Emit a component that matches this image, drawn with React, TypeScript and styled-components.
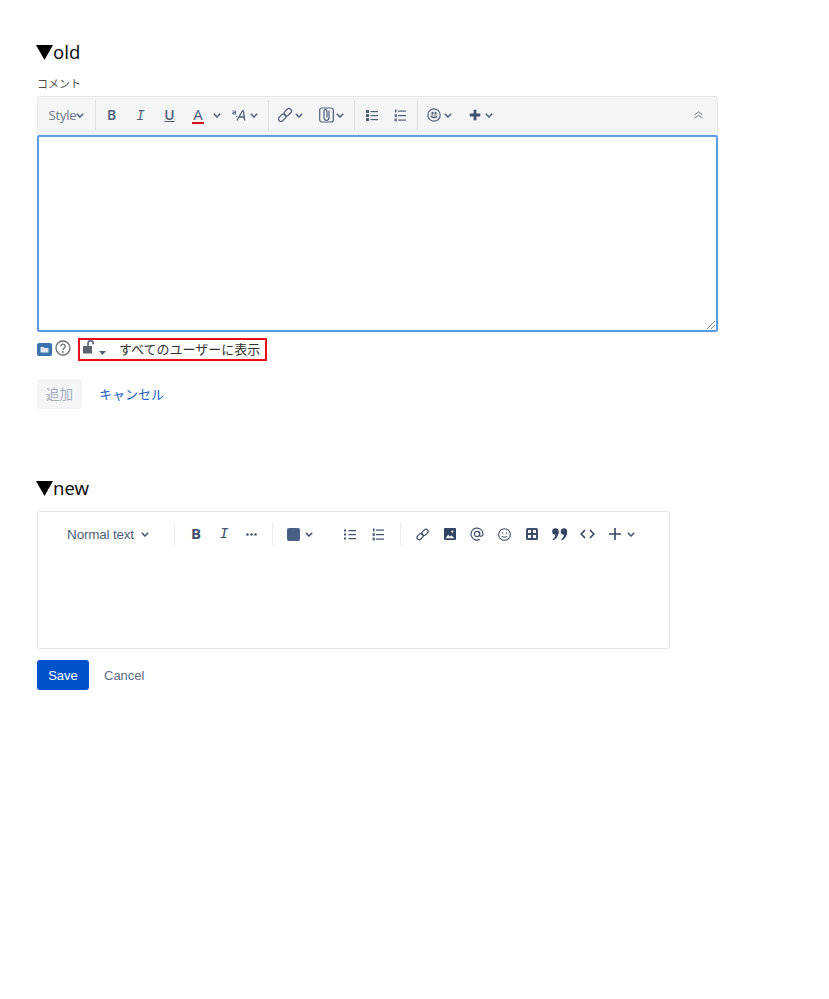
import React from "react";
import styled, { createGlobalStyle } from "styled-components";

const Global = createGlobalStyle`
  html, body { margin: 0; padding: 0; background: #fff; }
  body { font-family: "Noto Sans", "Noto Sans CJK JP", sans-serif; }
`;

const Page = styled.div`
  width: 829px;
  height: 999px;
  padding: 38px 0 0 36px;
  box-sizing: border-box;
  overflow: hidden;
`;

const Heading = styled.h2<{ $top?: number }>`
  margin: ${(p) => p.$top ?? 0}px 0 0;
  font-size: 18.5px;
  font-weight: 400;
  line-height: 28px;
  height: 28px;
  color: #111;
  display: flex;
  align-items: center;
`;

const Tri = styled.svg`
  width: 17px;
  height: 15px;
  margin-top: 1px;
  flex: none;
`;

const Label = styled.div`
  margin: 8px 0 0 1px;
  height: 18px;
  line-height: 18px;
  font-size: 11px;
  color: #505050;
  font-family: "Noto Sans CJK JP", sans-serif;
`;

const OldEditor = styled.div`
  margin: 4px 0 0 1px;
  width: 681px;
`;

const OldBar = styled.div`
  height: 39px;
  box-sizing: border-box;
  background: #f4f5f7;
  border: 1px solid #e4e6ea;
  border-bottom: none;
  border-radius: 3px 3px 0 0;
  padding-bottom: 2px;
  display: flex;
  align-items: center;
`;

const Cell = styled.div<{ $w: number }>`
  width: ${(p) => p.$w}px;
  height: 24px;
  flex: none;
  display: flex;
  align-items: center;
  justify-content: center;
`;

const Sep = styled.div<{ $h?: number; $color?: string }>`
  width: 1px;
  height: ${(p) => p.$h ?? 30}px;
  flex: none;
  background: ${(p) => p.$color ?? "#dcdfe4"};
`;

const Spacer = styled.div<{ $w: number }>`
  width: ${(p) => p.$w}px;
  flex: none;
`;

const Grow = styled.div`
  flex: 1;
`;

const StyleText = styled.span`
  font-size: 13px;
  letter-spacing: -0.2px;
  color: #6b778c;
  font-family: "Open Sans", sans-serif;
`;

const Letter = styled.span<{ $underline?: boolean; $size?: number; $weight?: number; $color?: string; $shift?: number }>`
  font-family: "Open Sans", sans-serif;
  font-size: ${(p) => p.$size ?? 14}px;
  font-weight: ${(p) => p.$weight ?? 600};
  line-height: 16px;
  margin-top: ${(p) => p.$shift ?? 0}px;
  color: ${(p) => p.$color ?? "#505f79"};
  text-decoration: ${(p) => (p.$underline ? "underline" : "none")};
`;

const ItalicLetter = styled.span<{ $size?: number; $color?: string }>`
  font-family: "Liberation Mono", monospace;
  font-style: italic;
  font-size: ${(p) => p.$size ?? 14}px;
  line-height: 16px;
  margin-top: 2px;
  color: ${(p) => p.$color ?? "#505f79"};
`;

const ColorA = styled.span`
  font-family: "Open Sans", sans-serif;
  font-size: 15px;
  line-height: 15px;
  color: #505f79;
  padding: 0 1px;
  margin-top: 1px;
  border-bottom: 2px solid #d5121e;
`;

const TextArea = styled.div`
  position: relative;
  height: 197px;
  box-sizing: border-box;
  border: 2px solid #5d9ce3;
  border-radius: 2px;
  background: #fff;
`;

const Grip = styled.svg`
  position: absolute;
  right: 0;
  bottom: 0;
  width: 10px;
  height: 10px;
`;

const Footer = styled.div`
  margin: 5px 0 0 1px;
  height: 24px;
  display: flex;
  align-items: center;
`;

const Folder = styled.svg`
  width: 15px;
  height: 13px;
  margin-top: 1px;
  flex: none;
`;

const Help = styled.svg`
  width: 16px;
  height: 16px;
  margin: -3px 0 0 3px;
  flex: none;
`;

const Restrict = styled.div`
  margin: 0 0 0 7px;
  width: 189px;
  height: 23px;
  box-sizing: border-box;
  border: 2px solid #e8101c;
  display: flex;
  align-items: center;
  padding-left: 3px;
`;

const LockWrap = styled.div`
  margin-top: -3px;
  flex: none;
`;

const CaretWrap = styled.div`
  margin: 7px 0 0 2px;
  flex: none;
`;

const RestrictText = styled.span`
  margin: -2px 0 0 13px;
  font-size: 13px;
  color: #333;
  white-space: nowrap;
  font-family: "Noto Sans CJK JP", sans-serif;
`;

const Actions = styled.div`
  margin: 18px 0 0 1px;
  height: 30px;
  display: flex;
  align-items: center;
`;

const DisabledBtn = styled.button`
  width: 45px;
  height: 30px;
  border: 0;
  padding: 0 0 2px;
  border-radius: 3px;
  background: #f4f5f7;
  color: #a5adba;
  font-size: 13.5px;
  font-family: "Noto Sans CJK JP", sans-serif;
`;

const LinkBtn = styled.a`
  margin: -1px 0 0 17px;
  color: #1b5fc1;
  font-size: 13px;
  font-family: "Noto Sans CJK JP", sans-serif;
`;

const NewEditor = styled.div`
  margin: 9px 0 0 1px;
  width: 633px;
  height: 138px;
  box-sizing: border-box;
  border: 1px solid #e1e3e7;
  border-radius: 3px;
  background: #fff;
`;

const NewBar = styled.div`
  height: 44px;
  display: flex;
  align-items: center;
  box-sizing: border-box;
`;

const NormalText = styled.span`
  font-family: "Liberation Sans", sans-serif;
  font-size: 13.5px;
  letter-spacing: -0.2px;
  color: #505f79;
  white-space: nowrap;
`;

const Swatch = styled.div`
  width: 13px;
  height: 13px;
  border-radius: 2px;
  background: #4a5f85;
`;

const NewActions = styled.div`
  margin: 11px 0 0 1px;
  display: flex;
  align-items: center;
`;

const SaveBtn = styled.button`
  width: 52px;
  height: 30px;
  border: 0;
  padding: 0;
  border-radius: 3px;
  background: #0052cc;
  color: #fff;
  font-size: 13px;
  font-family: "Liberation Sans", sans-serif;
`;

const CancelBtn = styled.span`
  margin-left: 15px;
  font-size: 13px;
  font-family: "Liberation Sans", sans-serif;
  color: #5e6c84;
`;

const Ic = styled.svg`
  flex: none;
  display: block;
`;

type P = { c?: string };

const Chev = ({ c = "#505f79" }: P) => (
  <Ic width="8" height="5" viewBox="0 0 8 5" fill="none">
    <path d="M.8.8L4 4 7.200.8" stroke={c} strokeWidth="1.500" />
  </Ic>
);

const Bullets = ({ c = "#505f79", d = 3 }: P & { d?: number }) => (
  <Ic width="12" height="11" viewBox="0 0 12 11" fill={c}>
    <rect x="0" y={1.5 - d / 2} width={d} height={d} />
    <rect x="0" y={5.5 - d / 2} width={d} height={d} />
    <rect x="0" y={9.5 - d / 2} width={d} height={d} />
    <rect x="4.500" y="1" width="7.500" height="1.200" />
    <rect x="4.500" y="5" width="7.500" height="1.200" />
    <rect x="4.500" y="9" width="7.500" height="1.200" />
  </Ic>
);

const Numbers = ({ c = "#505f79" }: P) => (
  <Ic width="12" height="13" viewBox="0 0 12 13" fill={c}>
    <rect x="1" y="0.500" width="1.500" height="3" />
    <rect x="0.500" y="5" width="2.500" height="3" opacity="0.8" />
    <rect x="0.500" y="9.500" width="2.500" height="3" opacity="0.8" />
    <rect x="4" y="1.500" width="8" height="1.200" />
    <rect x="4" y="6" width="8" height="1.200" />
    <rect x="4" y="10.500" width="8" height="1.200" />
  </Ic>
);

const OldLink = () => (
  <Ic width="16" height="16" viewBox="0 0 16 16" fill="none" stroke="#505f79" strokeWidth="1.200">
    <rect x="1" y="8.200" width="8.600" height="5" rx="2.500" transform="rotate(-45 5.300 10.700)" />
    <rect x="6.400" y="2.800" width="8.600" height="5" rx="2.500" transform="rotate(-45 10.700 5.300)" />
  </Ic>
);

const Attach = () => (
  <Ic width="15" height="16" viewBox="0 0 15 16" fill="none" stroke="#505f79">
    <rect x="0.700" y="1" width="13.600" height="14" rx="2" strokeWidth="1.200" />
    <path d="M10 3.500v7.300a2.500 2.500 0 0 1-5 0V4.200a1.500 1.500 0 0 1 3 0v6.300" strokeWidth="1.200" />
  </Ic>
);

const OldSmile = () => (
  <Ic width="14" height="14" viewBox="0 0 14 14" fill="none" stroke="#505f79" strokeWidth="1.200">
    <circle cx="7" cy="7" r="6.200" />
    <rect x="3.400" y="3.400" width="7.200" height="7" rx="2.500" fill="#c3c8d2" stroke="none" />
    <path d="M5.500 4v2.600M8.500 4v2.600" strokeWidth="1.400" />
    <path d="M4 8.200c1.500 1.800 4.500 1.800 6 0" strokeWidth="1.200" />
  </Ic>
);

const OldPlus = () => (
  <Ic width="12" height="12" viewBox="0 0 13 13" fill="#42526e">
    <path d="M5 .8h3V5h4.200v3H8v4.200H5V8H.8V5H5z" />
  </Ic>
);

const Collapse = () => (
  <Ic width="11" height="8" viewBox="0 0 11 9" fill="none" stroke="#6b778c" strokeWidth="1.100">
    <path d="M1 4.200l4.500-3 4.500 3M1 8l4.500-3 4.500 3" />
  </Ic>
);

const SizeA = () => (
  <Ic width="15" height="11" viewBox="0 0 15 11" fill="none" stroke="#505f79">
    <path d="M.5 1h3v3H.8V2.600h2.700" strokeWidth="0.900" />
    <path d="M5 10.500L10.500 .8h.9l1.200 9.700M7 7h6" strokeWidth="1.300" />
    <path d="M4 6.500h1.500" strokeWidth="0.800" />
  </Ic>
);

const Lock = () => (
  <Ic width="14" height="15" viewBox="0 0 14 15">
    <path d="M5 6V3.400a2.600 2.600 0 0 1 5.200 0V4.200" fill="none" stroke="#505f79" strokeWidth="1.600" />
    <rect x="0" y="6" width="9" height="7.500" fill="#5f6570" />
  </Ic>
);

const Caret = () => (
  <Ic width="7" height="4" viewBox="0 0 7 4" fill="#505f79">
    <path d="M0 0h7L3.500 4z" />
  </Ic>
);

const NewLink = () => (
  <Ic width="13" height="13" viewBox="0 0 14 14" fill="none" stroke="#42526e" strokeWidth="1.400">
    <rect x="0.600" y="7" width="7.600" height="4.600" rx="2.300" transform="rotate(-45 4.400 9.300)" />
    <rect x="5.800" y="2.400" width="7.600" height="4.600" rx="2.300" transform="rotate(-45 9.600 4.700)" />
  </Ic>
);

const NewImage = () => (
  <Ic width="12" height="12" viewBox="0 0 12 12">
    <rect width="12" height="12" rx="1" fill="#344563" />
    <path d="M1.500 10.200l2.700-3.400 1.800 1.900 1.400-1.400 3 2.900z" fill="#fff" />
    <circle cx="8.300" cy="3.600" r="1.100" fill="#fff" />
  </Ic>
);

const At = () => (
  <Ic width="14" height="14" viewBox="0 0 14 14" fill="none" stroke="#42526e" strokeWidth="1.200">
    <circle cx="7" cy="7" r="2.600" />
    <path d="M9.600 4.400v3.500c0 2 3.400 2 3.400-1A6 6 0 1 0 9.700 12.400" />
  </Ic>
);

const NewSmile = () => (
  <Ic width="13" height="13" viewBox="0 0 13 13" fill="none" stroke="#42526e" strokeWidth="1.100">
    <circle cx="6.500" cy="6.500" r="5.800" />
    <circle cx="4.500" cy="5" r="0.800" fill="#42526e" stroke="none" />
    <circle cx="8.500" cy="5" r="0.800" fill="#42526e" stroke="none" />
    <path d="M3.800 8c1.400 1.700 4 1.700 5.400 0" />
  </Ic>
);

const TableIc = () => (
  <Ic width="12" height="12" viewBox="0 0 12 12" fill="#3f4f6b">
    <path d="M1.500 0h9A1.500 1.500 0 0 1 12 1.500v9a1.500 1.500 0 0 1-1.500 1.500h-9A1.500 1.500 0 0 1 0 10.500v-9A1.500 1.500 0 0 1 1.500 0zM2 2v3h3V2zm5 0v3h3V2zM2 7v3h3V7zm5 0v3h3V7z" fillRule="evenodd" />
  </Ic>
);

const Quote = () => (
  <Ic width="16" height="13" viewBox="0 0 15 12" fill="#344563">
    <circle cx="3.200" cy="3.200" r="3" />
    <path d="M6.200 3.200C6.200 7.500 4 10.500 1 11.500L.6 10.500C2.500 9.300 3.200 7.500 3.200 6z" />
    <circle cx="11.200" cy="3.200" r="3" />
    <path d="M14.200 3.200c0 4.300-2.200 7.300-5.200 8.300l-.4-1c1.900-1.200 2.600-3 2.600-4.500z" />
  </Ic>
);

const Code = () => (
  <Ic width="15" height="10" viewBox="0 0 15 10" fill="none" stroke="#344563" strokeWidth="1.600">
    <path d="M5 1L1.200 5 5 9M10 1l3.800 4L10 9" />
  </Ic>
);

const NewPlus = () => (
  <Ic width="12" height="12" viewBox="0 0 12 12" fill="#344563">
    <path d="M5.200 0h1.600v5.200H12v1.600H6.800V12H5.200V6.800H0V5.200h5.200z" />
  </Ic>
);

const Dots = () => (
  <Ic width="11" height="3" viewBox="0 0 11 3" fill="#42526e">
    <circle cx="1.500" cy="1.500" r="1.300" />
    <circle cx="5.500" cy="1.500" r="1.300" />
    <circle cx="9.500" cy="1.500" r="1.300" />
  </Ic>
);

const Triangle = () => (
  <Tri viewBox="0 0 17 15">
    <path d="M0 0h17L8.500 15z" fill="#000" />
  </Tri>
);

export default function App() {
  return (
    <Page>
      <Global />
      <Heading>
        <Triangle />
        old
      </Heading>
      <Label>コメント</Label>
      <OldEditor>
        <OldBar>
          <Cell $w={57}>
            <StyleText>Style</StyleText>
            <Chev />
          </Cell>
          <Sep />
          <Spacer $w={1} />
          <Cell $w={29}><Letter>B</Letter></Cell>
          <Cell $w={29}><ItalicLetter>I</ItalicLetter></Cell>
          <Cell $w={29}><Letter $underline>U</Letter></Cell>
          <Cell $w={28}><ColorA>A</ColorA></Cell>
          <Cell $w={10}><Chev /></Cell>
          <Spacer $w={6} />
          <Cell $w={22}><SizeA /></Cell>
          <Cell $w={8}><Chev /></Cell>
          <Spacer $w={10} />
          <Sep />
          <Spacer $w={5} />
          <Cell $w={21}><OldLink /></Cell>
          <Cell $w={8}><Chev /></Cell>
          <Spacer $w={13} />
          <Cell $w={20}><Attach /></Cell>
          <Cell $w={8}><Chev /></Cell>
          <Spacer $w={10} />
          <Sep />
          <Spacer $w={6} />
          <Cell $w={22}><Bullets /></Cell>
          <Cell $w={34}><Numbers /></Cell>
          <Sep />
          <Spacer $w={6} />
          <Cell $w={20}><OldSmile /></Cell>
          <Cell $w={8}><Chev /></Cell>
          <Spacer $w={13} />
          <Cell $w={20}><OldPlus /></Cell>
          <Cell $w={8}><Chev /></Cell>
          <Grow />
          <Cell $w={14}><Collapse /></Cell>
          <Spacer $w={12} />
        </OldBar>
        <TextArea>
          <Grip viewBox="0 0 10 10">
            <path d="M1 9l8-8M5 9l4-4" stroke="#8a8f99" strokeWidth="1" fill="none" />
          </Grip>
        </TextArea>
      </OldEditor>
      <Footer>
        <Folder viewBox="0 0 15 13">
          <rect width="15" height="13" rx="2" fill="#3b73af" />
          <path d="M3.500 4h3l1 1h4v4.500h-8z" fill="#dfe8f3" />
        </Folder>
        <Help viewBox="0 0 16 16">
          <circle cx="8" cy="8" r="7" fill="none" stroke="#6b6f76" strokeWidth="1.300" />
          <path d="M5.800 6.300a2.200 2.200 0 1 1 3.300 1.900c-.8.500-1.100.9-1.100 1.800" fill="none" stroke="#6b6f76" strokeWidth="1.300" />
          <circle cx="8" cy="12" r="0.900" fill="#6b6f76" />
        </Help>
        <Restrict>
          <LockWrap><Lock /></LockWrap>
          <CaretWrap><Caret /></CaretWrap>
          <RestrictText>すべてのユーザーに表示</RestrictText>
        </Restrict>
      </Footer>
      <Actions>
        <DisabledBtn>追加</DisabledBtn>
        <LinkBtn>キャンセル</LinkBtn>
      </Actions>
      <Heading $top={65}>
        <Triangle />
        new
      </Heading>
      <NewEditor>
        <NewBar>
          <Spacer $w={29} />
          <Cell $w={67}><NormalText>Normal text</NormalText></Cell>
          <Cell $w={21}><Chev c="#42526e" /></Cell>
          <Spacer $w={19} />
          <Sep $h={24} $color="#eceef1" />
          <Cell $w={42}><Letter $size={15} $weight={700} $color="#42526e" $shift={-2}>B</Letter></Cell>
          <Cell $w={14}><ItalicLetter $size={15} $color="#42526e">I</ItalicLetter></Cell>
          <Cell $w={41}><Dots /></Cell>
          <Sep $h={24} $color="#eceef1" />
          <Spacer $w={13} />
          <Cell $w={15}><Swatch /></Cell>
          <Cell $w={15}><Chev c="#42526e" /></Cell>
          <Spacer $w={20} />
          <Cell $w={28}><Bullets c="#42526e" d={2} /></Cell>
          <Cell $w={28}><Numbers c="#42526e" /></Cell>
          <Spacer $w={8} />
          <Sep $h={24} $color="#eceef1" />
          <Spacer $w={7} />
          <Cell $w={28}><NewLink /></Cell>
          <Cell $w={27}><NewImage /></Cell>
          <Cell $w={27}><At /></Cell>
          <Cell $w={28}><NewSmile /></Cell>
          <Cell $w={28}><TableIc /></Cell>
          <Cell $w={28}><Quote /></Cell>
          <Cell $w={27}><Code /></Cell>
          <Spacer $w={3} />
          <Cell $w={22}><NewPlus /></Cell>
          <Cell $w={9}><Chev c="#42526e" /></Cell>
        </NewBar>
      </NewEditor>
      <NewActions>
        <SaveBtn>Save</SaveBtn>
        <CancelBtn>Cancel</CancelBtn>
      </NewActions>
    </Page>
  );
}
